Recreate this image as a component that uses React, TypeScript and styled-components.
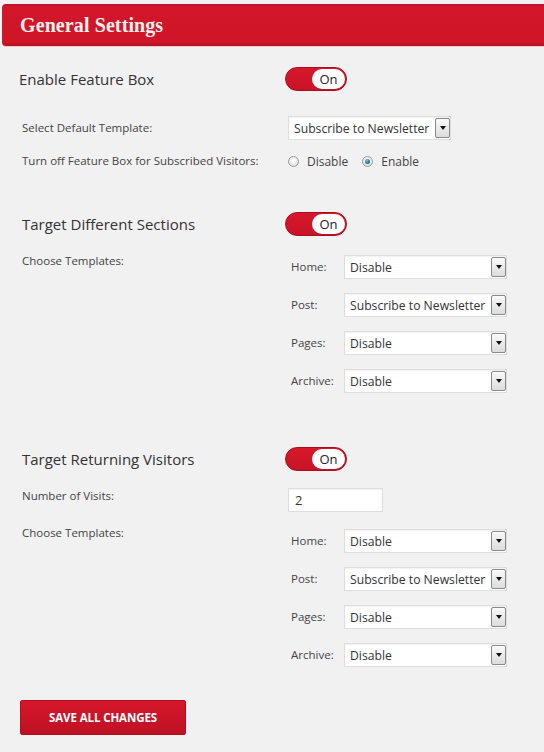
import styled, { createGlobalStyle } from 'styled-components'

const GlobalStyle = createGlobalStyle`
    html, body {
        margin: 0;
        padding: 0;
        background: #f1f1f1;
        overflow: hidden;
    }
    body {
        font-family: 'Open Sans', sans-serif;
        color: #333;
    }
`

const SPage = styled.div`
    width: 544px;
    height: 752px;
    padding-top: 4px;
    box-sizing: border-box;
    overflow: hidden;
`

const SHeader = styled.div`
    margin-left: 2px;
    margin-right: -8px;
    height: 42px;
    box-sizing: border-box;
    border-radius: 4px;
    background: linear-gradient(#c0102a 0, #d2162b 3px, #d01528 38px, #b10f20 42px);
    box-shadow: 0 1px 0 #f3c6ca;
    display: flex;
    align-items: center;
    padding-left: 18px;
    h1 {
        margin: 0;
        font: bold 20px 'Liberation Serif', serif;
        color: #fdf0f0;
        letter-spacing: 0.1px;
    }
`

const SRow = styled.div<{ $top: number; $shift?: number }>`
    display: grid;
    grid-template-columns: 266px 1fr;
    align-items: start;
    padding-left: ${({ $shift }) => 22 - ($shift || 0)}px;
    margin-top: ${({ $top }) => $top}px;
`

const SHeadRow = styled(SRow)`
    align-items: center;
    height: 24px;
`

const SHeading = styled.h2`
    margin: 0;
    font-size: 15px;
    font-weight: normal;
    color: #333;
    line-height: 20px;
`

const SLabel = styled.span<{ $offset?: number }>`
    font-size: 11.5px;
    line-height: 16px;
    color: #444;
    margin-top: ${({ $offset }) => $offset || 0}px;
`

const SToggle = styled.div<{ $nudge?: number }>`
    width: 62px;
    height: 24px;
    box-sizing: border-box;
    border-radius: 12px;
    background: linear-gradient(#d8182c, #c81327);
    border: 1px solid #a80e1e;
    display: flex;
    justify-content: flex-end;
    align-items: center;
    padding-right: 1px;
    margin-left: ${({ $nudge }) => $nudge || 0}px;
    .knob {
        width: 33px;
        height: 20px;
        border-radius: 10px;
        background: #fff;
        display: flex;
        align-items: center;
        justify-content: center;
        font-size: 13px;
        font-weight: 500;
        color: #222;
    }
`

const SSelect = styled.div<{ $width: number }>`
    width: ${({ $width }) => $width}px;
    height: 24px;
    box-sizing: border-box;
    background: #fff;
    border: 1px solid #dedede;
    box-shadow: inset 0 1px 2px rgba(0, 0, 0, 0.06);
    display: flex;
    align-items: center;
    padding-left: 5px;
    font-size: 12.2px;
    color: #333;
    white-space: nowrap;
    .arrow {
        margin-left: auto;
        width: 15px;
        height: 20px;
        box-sizing: border-box;
        border: 1px solid #8a8a8a;
        border-radius: 2px;
        background: linear-gradient(#fafafa, #dcdcdc);
        display: flex;
        align-items: center;
        justify-content: center;
    }
    .arrow::after {
        content: '';
        border-left: 3px solid transparent;
        border-right: 3px solid transparent;
        border-top: 4px solid #111;
    }
`

const SInput = styled.div`
    width: 95px;
    height: 24px;
    box-sizing: border-box;
    background: #fff;
    border: 1px solid #dedede;
    box-shadow: inset 0 1px 2px rgba(0, 0, 0, 0.06);
    display: flex;
    align-items: center;
    padding-left: 6px;
    font-size: 13px;
    color: #333;
`

const SRadioGroup = styled.div`
    display: flex;
    align-items: center;
    height: 16px;
    font-size: 12px;
    color: #444;
    label {
        display: flex;
        align-items: center;
        gap: 8px;
        margin-right: 14px;
    }
`

const SRadio = styled.span<{ $checked?: boolean }>`
    width: 11px;
    height: 11px;
    box-sizing: border-box;
    border-radius: 50%;
    border: 1px solid #9a9a9a;
    background: radial-gradient(circle at 50% 40%, #fff 0, #e8e8e8 60%, #cfcfcf 100%);
    display: flex;
    align-items: center;
    justify-content: center;
    &::after {
        content: '';
        display: ${({ $checked }) => ($checked ? 'block' : 'none')};
        width: 5px;
        height: 5px;
        border-radius: 50%;
        background: radial-gradient(circle at 40% 35%, #7fd0ee 0, #2a7aa6 50%, #123f5c 100%);
    }
`

const STemplateList = styled.div<{ $pad: number }>`
    display: flex;
    flex-direction: column;
    gap: 14px;
    padding-top: ${({ $pad }) => $pad}px;
    padding-left: 3px;
`

const STemplateRow = styled.div`
    display: grid;
    grid-template-columns: 53px auto;
    align-items: center;
`

const SSaveButton = styled.button`
    margin: 33px 0 0 20px;
    width: 166px;
    height: 35px;
    border: 1px solid #b10f20;
    border-radius: 2px;
    background: linear-gradient(#d6172b, #bf1124);
    color: #fff;
    font-family: 'Open Sans', sans-serif;
    font-size: 11.5px;
    font-weight: bold;
    text-transform: uppercase;
    letter-spacing: -0.1px;
    cursor: pointer;
`

function Toggle({ nudge }: { nudge?: number }) {
    return (
        <SToggle $nudge={nudge}>
            <span className="knob">On</span>
        </SToggle>
    )
}

function Select({ value, width }: { value: string; width: number }) {
    return (
        <SSelect $width={width}>
            {value}
            <span className="arrow" />
        </SSelect>
    )
}

function TemplateChooser({ pad, values }: { pad: number; values: string[] }) {
    const names = ['Home:', 'Post:', 'Pages:', 'Archive:']
    return (
        <STemplateList $pad={pad}>
            {names.map((name, i) => (
                <STemplateRow key={name}>
                    <SLabel>{name}</SLabel>
                    <Select value={values[i]} width={163} />
                </STemplateRow>
            ))}
        </STemplateList>
    )
}

export default function App() {
    const templates = ['Disable', 'Subscribe to Newsletter', 'Disable', 'Disable']
    return (
        <SPage>
            <GlobalStyle />
            <SHeader>
                <h1>General Settings</h1>
            </SHeader>

            <SHeadRow $top={21} $shift={3}>
                <SHeading>Enable Feature Box</SHeading>
                <Toggle nudge={0} />
            </SHeadRow>
            <SRow $top={25}>
                <SLabel $offset={4}>Select Default Template:</SLabel>
                <Select value="Subscribe to Newsletter" width={163} />
            </SRow>
            <SRow $top={13}>
                <SLabel>Turn off Feature Box for Subscribed Visitors:</SLabel>
                <SRadioGroup>
                    <label>
                        <SRadio />
                        Disable
                    </label>
                    <label>
                        <SRadio $checked />
                        Enable
                    </label>
                </SRadioGroup>
            </SRow>

            <SHeadRow $top={43}>
                <SHeading>Target Different Sections</SHeading>
                <Toggle nudge={-3} />
            </SHeadRow>
            <SRow $top={17}>
                <SLabel>Choose Templates:</SLabel>
                <TemplateChooser pad={2} values={templates} />
            </SRow>

            <SHeadRow $top={54}>
                <SHeading>Target Returning Visitors</SHeading>
                <Toggle nudge={-3} />
            </SHeadRow>
            <SRow $top={17}>
                <SLabel>Number of Visits:</SLabel>
                <SInput>2</SInput>
            </SRow>
            <SRow $top={13}>
                <SLabel>Choose Templates:</SLabel>
                <TemplateChooser pad={4} values={templates} />
            </SRow>

            <SSaveButton>Save All Changes</SSaveButton>
        </SPage>
    )
}
